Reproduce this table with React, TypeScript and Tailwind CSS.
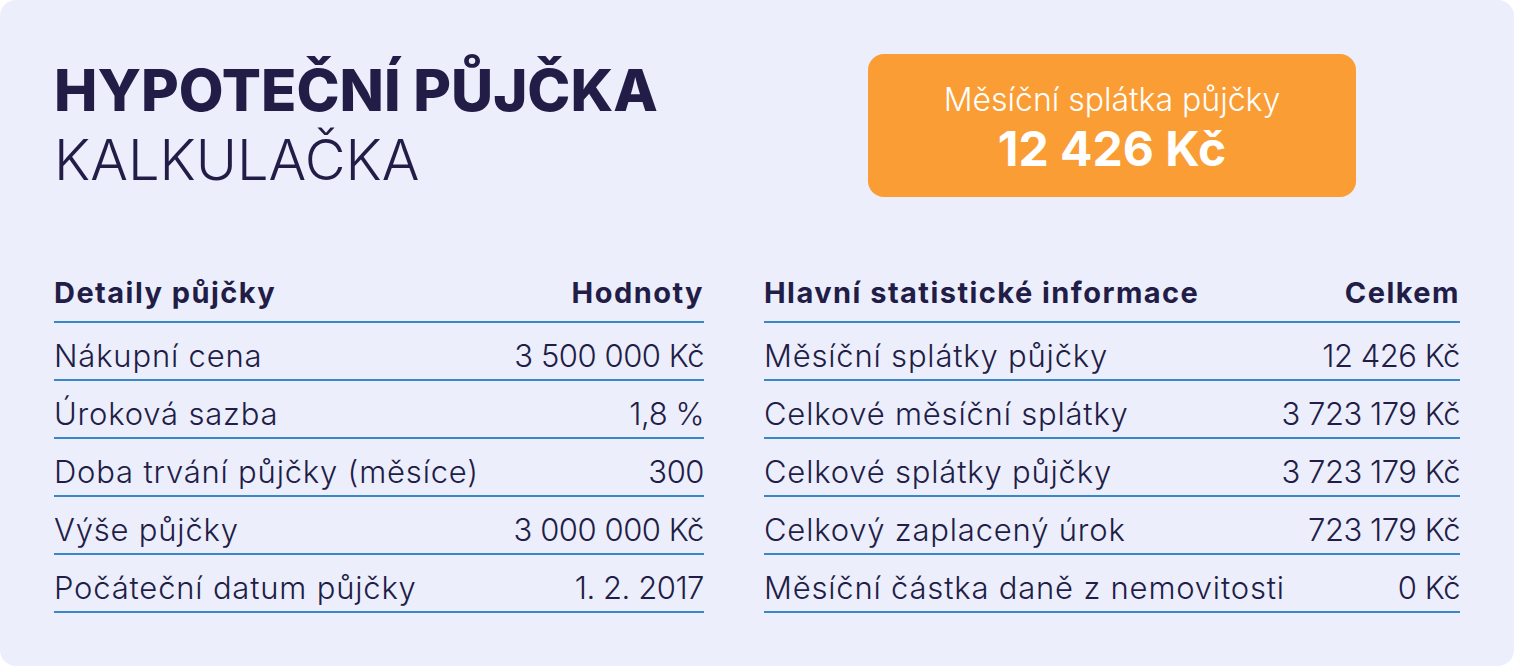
const details = [
  { label: "Nákupní cena", value: "3 500 000 Kč" },
  { label: "Úroková sazba", value: "1,8 %" },
  { label: "Doba trvání půjčky (měsíce)", value: "300" },
  { label: "Výše půjčky", value: "3 000 000 Kč" },
  { label: "Počáteční datum půjčky", value: "1. 2. 2017" },
];

const stats = [
  { label: "Měsíční splátky půjčky", value: "12 426 Kč" },
  { label: "Celkové měsíční splátky", value: "3 723 179 Kč" },
  { label: "Celkové splátky půjčky", value: "3 723 179 Kč" },
  { label: "Celkový zaplacený úrok", value: "723 179 Kč" },
  { label: "Měsíční částka daně z nemovitosti", value: "0 Kč" },
];

function Table({ title, col, rows }: { title: string; col: string; rows: { label: string; value: string }[] }) {
  return (
    <div className="flex flex-col">
      <div className="flex justify-between items-end h-[54px] pb-[14px] border-b-2 border-[#3a87c8] text-[29px] font-bold tracking-[0.05em] leading-none">
        <span>{title}</span>
        <span>{col}</span>
      </div>
      {rows.map((r) => (
        <div key={r.label} className="flex justify-between items-end h-[58px] pb-[8px] border-b-2 border-[#3a87c8] text-[31px] font-light leading-none">
          <span className="tracking-[0.026em]">{r.label}</span>
          <span className="tracking-[-0.015em]">{r.value}</span>
        </div>
      ))}
    </div>
  );
}

export default function App() {
  return (
    <div className="bg-white w-[1514px] h-[666px]">
      <div className="w-full h-full rounded-[16px] bg-[#eceefb] px-[54px] pt-[54px] text-[#221d47] font-['Inter',sans-serif]">
        <div className="flex gap-[60px]">
          <div className="w-[650px] pt-[1px]">
            <h1 className="text-[58px] font-extrabold leading-[70px]">HYPOTEČNÍ PŮJČKA</h1>
            <div className="text-[56px] font-light leading-[70px]">KALKULAČKA</div>
          </div>
          <div className="flex-1 flex justify-center">
            <div className="w-[488px] h-[143px] rounded-[16px] bg-[#fa9d35] text-white flex flex-col items-center justify-center pt-[6px]">
              <div className="text-[32px] font-light leading-[40px]">Měsíční splátka půjčky</div>
              <div className="text-[48px] font-bold leading-[58px]">12 426 Kč</div>
            </div>
          </div>
        </div>
        <div className="flex gap-[60px] mt-[72px]">
          <div className="w-[650px]">
            <Table title="Detaily půjčky" col="Hodnoty" rows={details} />
          </div>
          <div className="flex-1">
            <Table title="Hlavní statistické informace" col="Celkem" rows={stats} />
          </div>
        </div>
      </div>
    </div>
  );
}
